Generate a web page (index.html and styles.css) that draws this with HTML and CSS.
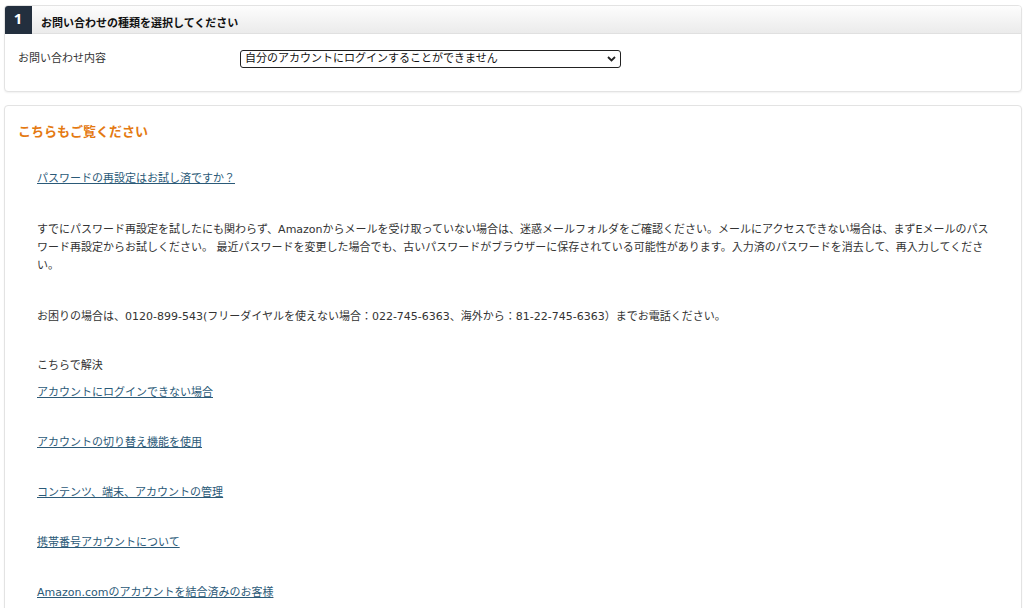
FILE: index.html
```html
<!DOCTYPE html>
<html lang="ja">
<head>
<meta charset="utf-8">
<link rel="stylesheet" href="styles.css">
</head>
<body>
<div class="page">
  <section class="panel panel-step">
    <div class="panel-head">
      <div class="step">1</div>
      <div class="head-title">お問い合わせの種類を選択してください</div>
    </div>
    <div class="panel-body">
      <div class="row">
        <span class="label">お問い合わせ内容</span>
        <div class="select">
          <span class="select-text">自分のアカウントにログインすることができません</span>
          <svg class="chev" width="9" height="6" viewBox="0 0 9 6"><path d="M1 1l3.5 3.5L8 1" fill="none" stroke="#222" stroke-width="1.8"/></svg>
        </div>
      </div>
    </div>
  </section>

  <section class="panel panel-info">
    <h2 class="info-title">こちらもご覧ください</h2>
    <div class="info-body">
      <p class="link-line first"><a href="#">パスワードの再設定はお試し済ですか？</a></p>
      <p class="para">すでにパスワード再設定を試したにも関わらず、Amazonからメールを受け取っていない場合は、迷惑メールフォルダをご確認ください。メールにアクセスできない場合は、まずEメールのパスワード再設定からお試しください。 最近パスワードを変更した場合でも、古いパスワードがブラウザーに保存されている可能性があります。入力済のパスワードを消去して、再入力してください。</p>
      <p class="para phone">お困りの場合は、0120-899-543(フリーダイヤルを使えない場合：022-745-6363、海外から：81-22-745-6363）までお電話ください。</p>
      <p class="solve">こちらで解決</p>
      <ul class="links">
        <li><a href="#">アカウントにログインできない場合</a></li>
        <li><a href="#">アカウントの切り替え機能を使用</a></li>
        <li><a href="#">コンテンツ、端末、アカウントの管理</a></li>
        <li><a href="#">携帯番号アカウントについて</a></li>
        <li><a href="#">Amazon.comのアカウントを結合済みのお客様</a></li>
      </ul>
    </div>
  </section>
</div>
</body>
</html>
```

FILE: styles.css
```css
* { box-sizing: border-box; }
html, body { margin: 0; padding: 0; background: #fff; }
body {
  font-family: "DejaVu Sans", "Noto Sans CJK JP", sans-serif;
  font-size: 11px;
  line-height: 18px;
  color: #333;
}
.page {
  padding: 5px 2px 0 4px;
}
.panel {
  border: 1px solid #e3e3e3;
  border-radius: 4px;
  box-shadow: 0 1px 2px rgba(0,0,0,0.06);
  background: #fff;
}
.panel-step {
  height: 87px;
  margin-bottom: 13px;
  overflow: hidden;
}
.panel-head {
  display: flex;
  height: 28px;
  background: linear-gradient(#fdfdfd, #ebebeb);
  border-bottom: 1px solid #e0e0e0;
}
.step {
  width: 28px;
  margin: -1px 0 -1px -1px;
  background: #232f3e;
  color: #fff;
  font-family: "Open Sans", sans-serif;
  font-weight: bold;
  font-size: 15px;
  display: flex;
  align-items: center;
  justify-content: center;
  padding-bottom: 3px;
  border-radius: 4px 0 0 0;
}
.head-title {
  align-self: flex-end;
  padding: 0 0 0 9px;
  font-weight: bold;
  color: #111;
  line-height: 18px;
}
.panel-body {
  padding: 16px 14px 0 13px;
}
.row {
  display: flex;
  align-items: center;
}
.label {
  width: 222px;
}
.select {
  width: 381px;
  height: 18px;
  border: 1px solid #222;
  border-radius: 3px;
  display: flex;
  align-items: center;
  justify-content: space-between;
  padding: 0 4px 0 4px;
  color: #111;
  font-size: 11px;
}
.chev { display: block; }

.panel-info {
  height: 520px;
  padding: 17px 24px 0 13px;
}
.info-title {
  margin: 0;
  font-size: 13px;
  line-height: 18px;
  color: #e47911;
  font-weight: bold;
}
.info-body {
  padding-left: 19px;
}
p { margin: 0; }
a { color: #2b5a78; text-decoration: underline; }
.link-line.first { margin-top: 29px; }
.para { margin-top: 33px; }
.para.phone { margin-top: 33px; }
.solve { margin-top: 31px; }
.links {
  list-style: none;
  margin: 9px 0 0;
  padding: 0;
  display: flex;
  flex-direction: column;
  gap: 32px;
}
```
